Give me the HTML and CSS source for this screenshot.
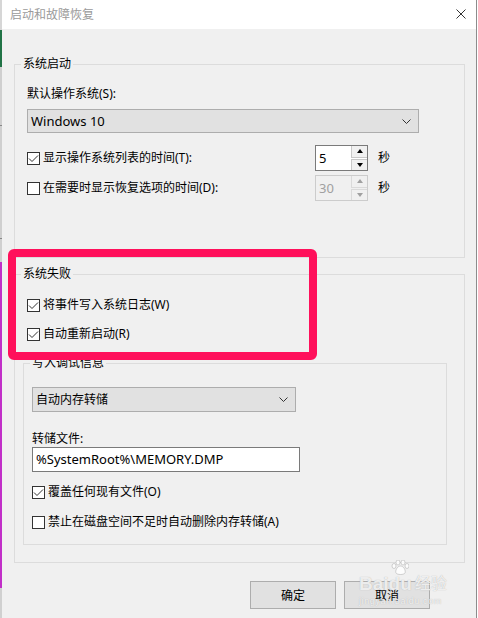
FILE: index.html
```html
<!DOCTYPE html>
<html lang="zh-CN">

<head>
  <meta charset="UTF-8">
  <title>启动和故障恢复</title>
  <link rel="stylesheet" href="styles.css">
</head>

<body>
  <div class="screen">
    <div class="edge"></div>

    <div class="window">
      <div class="titlebar">
        <span class="title">启动和故障恢复</span>
        <svg class="close" width="10" height="10" viewBox="0 0 10 10">
          <path d="M0.5 0.5 L9.5 9.5 M9.5 0.5 L0.5 9.5" stroke="#333" stroke-width="1" fill="none" />
        </svg>
      </div>

      <div class="content">
        <!-- 系统启动 -->
        <fieldset class="group startup">
          <legend>系统启动</legend>
          <div class="label first">默认操作系统(S):</div>
          <div class="select os">
            <span>Windows 10</span>
            <svg class="chevron" width="9" height="5" viewBox="0 0 9 5">
              <path d="M0.5 0.5 L4.5 4.5 L8.5 0.5" stroke="#333" fill="none" />
            </svg>
          </div>

          <div class="time-row">
            <label class="check">
              <span class="box checked">
                <svg width="11" height="11" viewBox="0 0 11 11">
                  <path d="M1 5.5 L4 8.5 L10 2.5" stroke="#333" fill="none" />
                </svg>
              </span>
              显示操作系统列表的时间(T):
            </label>
            <div class="spin">
              <span class="val">5</span>
              <div class="arrows">
                <span class="arrow up"></span>
                <span class="arrow down"></span>
              </div>
            </div>
            <span class="unit">秒</span>
          </div>

          <div class="time-row second">
            <label class="check">
              <span class="box"></span>
              在需要时显示恢复选项的时间(D):
            </label>
            <div class="spin disabled">
              <span class="val">30</span>
              <div class="arrows">
                <span class="arrow up"></span>
                <span class="arrow down"></span>
              </div>
            </div>
            <span class="unit">秒</span>
          </div>
        </fieldset>

        <!-- 系统失败 -->
        <fieldset class="group failure">
          <legend>系统失败</legend>
          <label class="check row-w">
            <span class="box checked">
              <svg width="11" height="11" viewBox="0 0 11 11">
                <path d="M1 5.5 L4 8.5 L10 2.5" stroke="#333" fill="none" />
              </svg>
            </span>
            将事件写入系统日志(W)
          </label>
          <label class="check row-r">
            <span class="box checked">
              <svg width="11" height="11" viewBox="0 0 11 11">
                <path d="M1 5.5 L4 8.5 L10 2.5" stroke="#333" fill="none" />
              </svg>
            </span>
            自动重新启动(R)
          </label>

          <fieldset class="group debug">
            <legend>写入调试信息</legend>
            <div class="select dump">
              <span>自动内存转储</span>
              <svg class="chevron" width="9" height="5" viewBox="0 0 9 5">
                <path d="M0.5 0.5 L4.5 4.5 L8.5 0.5" stroke="#333" fill="none" />
              </svg>
            </div>
            <div class="label dump-label">转储文件:</div>
            <div class="textbox">%SystemRoot%\MEMORY.DMP</div>
            <label class="check row-o">
              <span class="box checked">
                <svg width="11" height="11" viewBox="0 0 11 11">
                  <path d="M1 5.5 L4 8.5 L10 2.5" stroke="#333" fill="none" />
                </svg>
              </span>
              覆盖任何现有文件(O)
            </label>
            <label class="check row-a">
              <span class="box"></span>
              禁止在磁盘空间不足时自动删除内存转储(A)
            </label>
          </fieldset>
        </fieldset>

        <div class="buttons">
          <button>确定</button>
          <button>取消</button>
        </div>
      </div>

      <!-- 标注框 -->
      <div class="highlight"></div>

      <!-- 水印 -->
      <div class="watermark">
        <div class="wm-top">
          <span class="wm-latin">Bai</span>
          <span class="wm-du">
            <svg class="paw" width="18" height="15" viewBox="0 0 18 15">
              <ellipse cx="3" cy="6" rx="2" ry="2.5" />
              <ellipse cx="7" cy="2.5" rx="2" ry="2.5" />
              <ellipse cx="12" cy="2.5" rx="2" ry="2.5" />
              <ellipse cx="16" cy="6" rx="2" ry="2.5" />
              <path d="M9.5 6 C6 6 4 11 5 13 C6 15 13 15 14 13 C15 11 13 6 9.5 6 Z" />
            </svg>
            <span class="wm-latin">du</span>
          </span>
          <span class="wm-cjk">经验</span>
        </div>
        <div class="wm-url">jingyan.baidu.com</div>
      </div>
    </div>

    <div class="right-edge"></div>
  </div>
</body>

</html>
```

FILE: styles.css
```css
body {
  margin: 0;
  padding: 0;
  font-family: "Noto Sans", "Noto Sans CJK SC", sans-serif;
  font-size: 12px;
  line-height: 16px;
  color: #000;
}

.screen {
  display: flex;
  width: 478px;
  height: 618px;
  overflow: hidden;
}

/* 背后窗口露出的一条边 */
.edge {
  width: 2px;
  flex-shrink: 0;
  background: linear-gradient(to bottom,
      #d6d6d6 0, #d6d6d6 30px,
      #217346 30px, #217346 67px,
      #cfcfcf 67px, #cfcfcf 125px,
      #888 125px, #888 126px,
      #cfcfcf 126px, #cfcfcf 238px,
      #888 238px, #888 239px,
      #cfcfcf 239px, #cfcfcf 262px,
      #c12fc8 262px, #c12fc8 588px,
      #d0d0d0 588px);
}

.window {
  position: relative;
  width: 474px;
  flex-shrink: 0;
  background: #f0f0f0;
  display: flex;
  flex-direction: column;
}

.right-edge {
  width: 1px;
  background: #8c8c8c;
}

.titlebar {
  height: 29px;
  background: #fff;
  display: flex;
  align-items: center;
  justify-content: space-between;
  padding: 0 10px 0 8px;
}

.title {
  color: #9a9a9a;
  font-size: 12px;
}

.close {
  margin-top: -1px;
}

.content {
  padding-top: 27px;
}

/* --------------------------------------------------------------
   分组框
   -------------------------------------------------------------- */
.group {
  margin: 0;
  border: 1px solid #dcdcdc;
  min-width: 0;
}

.group legend {
  padding: 0 2px;
  line-height: 16px;
}

.startup,
.failure {
  margin: 0 11px 0 12px;
  padding: 0 12px;
}

.startup legend,
.failure legend {
  margin-left: -6px;
}

.startup {
  padding-bottom: 56px;
}

.failure {
  margin-top: 8px;
  padding-bottom: 17px;
}

.debug {
  margin: 13px 5px 0 -4px;
  padding: 0 8px 14px;
}

.debug legend {
  margin-left: -2px;
}

.label {
  height: 16px;
}

.label.first {
  margin-top: 14px;
}

/* 下拉框 */
.select {
  box-sizing: border-box;
  display: flex;
  align-items: center;
  justify-content: space-between;
  background: #e1e1e1;
  border: 1px solid #adadad;
  padding: 0 7px 0 3px;
}

.select.os {
  width: 392px;
  height: 24px;
  margin-top: 7px;
  font-size: 13px;
}

.select.dump {
  width: 264px;
  height: 25px;
  margin-top: 16px;
}

/* 复选框 */
.check {
  display: flex;
  align-items: center;
  height: 16px;
}

.box {
  box-sizing: border-box;
  width: 13px;
  height: 13px;
  border: 1px solid #333;
  background: #fff;
  margin-right: 3px;
  flex-shrink: 0;
  display: flex;
  align-items: center;
  justify-content: center;
}

.row-w {
  margin-top: 15px;
}

.row-r {
  margin-top: 13px;
}

.row-o {
  margin-top: 12px;
}

.row-a {
  margin-top: 14px;
}

/* 时间行 */
.time-row {
  display: flex;
  align-items: center;
  margin-top: 12px;
}

.time-row.second {
  margin-top: 4px;
}

.time-row .check {
  width: 288px;
}

.spin {
  box-sizing: border-box;
  width: 53px;
  height: 26px;
  border: 1px solid #7a7a7a;
  background: #fff;
  display: flex;
  justify-content: space-between;
}

.spin .val {
  padding-left: 3px;
  line-height: 24px;
  font-size: 13px;
}

.arrows {
  width: 16px;
  display: flex;
  flex-direction: column;
  gap: 1px;
  padding: 0 0 0 0;
}

.arrow {
  flex: 1;
  box-sizing: border-box;
  border: 1px solid #c8c8c8;
  border-right: 0;
  background: #f0f0f0;
  display: flex;
  align-items: center;
  justify-content: center;
}

.arrow.up {
  border-top: 0;
}

.arrow.down {
  border-bottom: 0;
}

.arrow::after {
  content: "";
  border-left: 3px solid transparent;
  border-right: 3px solid transparent;
}

.up::after {
  border-bottom: 4px solid #000;
}

.down::after {
  border-top: 4px solid #000;
}

.spin.disabled {
  border-color: #cccccc;
  background: #f0f0f0;
  color: #a0a0a0;
}

.spin.disabled .arrow {
  border-color: #dadada;
}

.spin.disabled .up::after {
  border-bottom-color: #a0a0a0;
}

.spin.disabled .down::after {
  border-top-color: #a0a0a0;
}

.unit {
  margin-left: 10px;
}

/* 转储文件 */
.dump-label {
  margin-top: 19px;
}

.textbox {
  box-sizing: border-box;
  width: 268px;
  height: 25px;
  border: 1px solid #7a7a7a;
  background: #fff;
  padding-left: 3px;
  line-height: 23px;
  font-size: 13px;
}

/* 按钮 */
.buttons {
  display: flex;
  justify-content: flex-end;
  gap: 8px;
  margin-top: 18px;
  padding-right: 46px;
}

button {
  width: 86px;
  height: 28px;
  background: #e1e1e1;
  border: 1px solid #adadad;
  font-family: inherit;
  font-size: 12px;
  color: #000;
  padding: 0;
}

/* --------------------------------------------------------------
   标注框 与 水印
   -------------------------------------------------------------- */
.highlight {
  position: absolute;
  left: 6px;
  top: 249px;
  width: 309px;
  height: 111px;
  box-sizing: border-box;
  border: 8px solid #ff105b;
  border-radius: 6px;
}

.watermark {
  position: absolute;
  left: 357px;
  top: 560px;
  color: rgba(255, 255, 255, 0.8);
  text-shadow: 0 0 1px #a8a8a8;
  font-family: "Liberation Sans", "Noto Sans CJK SC", sans-serif;
}

.wm-top {
  display: flex;
  align-items: flex-end;
}

.wm-latin {
  font-size: 19px;
  font-weight: bold;
  line-height: 18px;
}

.wm-du {
  display: flex;
  flex-direction: column;
  align-items: center;
}

.paw {
  fill: rgba(255, 255, 255, 0.85);
  stroke: #b4b4b4;
  stroke-width: 0.6;
}

.wm-cjk {
  font-size: 16px;
  line-height: 18px;
  margin-left: 3px;
}

.wm-url {
  font-size: 9px;
  line-height: 12px;
  letter-spacing: 0.6px;
  margin-top: 2px;
}
```
